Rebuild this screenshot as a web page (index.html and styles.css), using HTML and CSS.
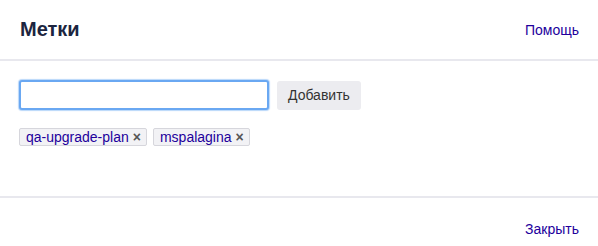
FILE: index.html
```html
<!DOCTYPE html>
<html>
<head>
<meta charset="utf-8">
<link rel="stylesheet" href="styles.css">
</head>
<body>
<div class="dialog">
  <div class="header">
    <h1 class="title">Метки</h1>
    <a class="link" href="#">Помощь</a>
  </div>
  <div class="content">
    <div class="add-row">
      <input class="input" type="text">
      <button class="btn">Добавить</button>
    </div>
    <div class="tags">
      <span class="tag"><span class="tag-name">qa-upgrade-plan</span><span class="tag-x">×</span></span>
      <span class="tag"><span class="tag-name">mspalagina</span><span class="tag-x">×</span></span>
    </div>
  </div>
  <div class="footer">
    <a class="link" href="#">Закрыть</a>
  </div>
</div>
</body>
</html>
```
FILE: styles.css
```css
html, body {
  margin: 0;
  padding: 0;
  background: #fff;
}
body {
  font-family: "Liberation Sans", Arial, sans-serif;
  width: 598px;
  height: 246px;
  overflow: hidden;
}
.dialog {
  display: flex;
  flex-direction: column;
  height: 246px;
}
.header {
  box-sizing: border-box;
  height: 61px;
  flex: none;
  display: flex;
  align-items: center;
  justify-content: space-between;
  padding: 0 19px 0 20px;
  border-bottom: 2px solid #e8e8ee;
}
.title {
  margin: 0;
  font-size: 20px;
  font-weight: bold;
  color: #1c2540;
}
.link {
  font-size: 14px;
  color: #22009c;
  text-decoration: none;
}
.content {
  box-sizing: border-box;
  height: 137px;
  flex: none;
  padding: 19px 20px 0 19px;
  border-bottom: 2px solid #e8e8ee;
}
.add-row {
  display: flex;
  align-items: center;
  gap: 8px;
}
.input {
  box-sizing: border-box;
  width: 250px;
  height: 30px;
  margin: 0;
  border: 2px solid #6aa8f2;
  border-radius: 3px;
  box-shadow: 0 0 1px 1px #b9d7fa;
  outline: none;
  background: #fff;
}
.btn {
  box-sizing: border-box;
  height: 29px;
  padding: 0 11px;
  margin: 0;
  border: none;
  border-radius: 3px;
  background: #ececf0;
  color: #333;
  font-family: "Liberation Sans", Arial, sans-serif;
  font-size: 14px;
}
.tags {
  display: flex;
  gap: 6px;
  margin-top: 18px;
}
.tag {
  display: inline-flex;
  align-items: center;
  box-sizing: border-box;
  height: 18px;
  padding: 0 5px 0 6px;
  border: 1px solid #d6d6dc;
  border-radius: 2px;
  background: #f2f2f5;
  font-size: 14px;
  color: #22009c;
}
.tag-x {
  margin-left: 4px;
  color: #555;
  font-size: 14px;
  font-weight: bold;
  line-height: 1;
}
.footer {
  box-sizing: border-box;
  height: 48px;
  flex: none;
  display: flex;
  align-items: flex-start;
  justify-content: flex-end;
  padding: 23px 19px 0 20px;
}
```
